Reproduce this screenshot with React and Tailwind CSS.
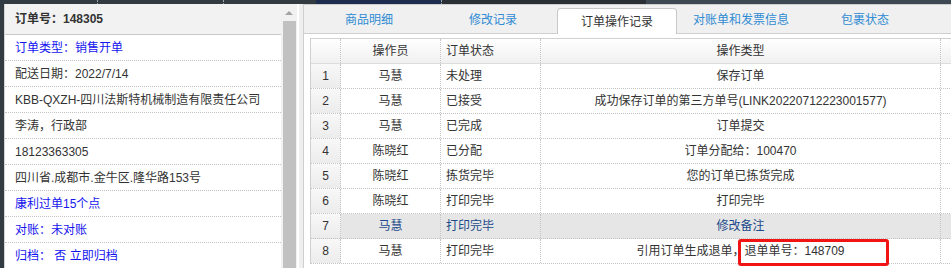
import React from "react";

const leftRows = [
  { t: "订单类型：销售开单", blue: true },
  { t: "配送日期：2022/7/14" },
  { t: "KBB-QXZH-四川法斯特机械制造有限责任公司" },
  { t: "李涛，行政部" },
  { t: "18123363305" },
  { t: "四川省.成都市.金牛区.隆华路153号" },
  { t: "康利过单15个点", blue: true },
  { t: "对账：未对账", blue: true },
  { t: "归档： 否 立即归档", blue: true },
];

const rows = [
  ["1", "马慧", "未处理", "保存订单"],
  ["2", "马慧", "已接受", "成功保存订单的第三方单号(LINK20220712223001577)"],
  ["3", "马慧", "已完成", "订单提交"],
  ["4", "陈晓红", "已分配", "订单分配给：100470"],
  ["5", "陈晓红", "拣货完毕", "您的订单已拣货完成"],
  ["6", "陈晓红", "打印完毕", "打印完毕"],
  ["7", "马慧", "打印完毕", "修改备注"],
  ["8", "马慧", "打印完毕", "引用订单生成退单，退单单号：148709"],
];

const tabs = ["商品明细", "修改记录", "订单操作记录", "对账单和发票信息", "包裹状态"];

export default function App() {
  return (
    <div className="w-[951px] h-[268px] overflow-hidden bg-[#323a42] flex flex-col font-['Liberation_Sans','Noto_Sans_CJK_SC',sans-serif] text-[12px] text-[#333]">
      {/* top strip */}
      <div className="h-[4px] flex shrink-0">
        <div className="w-[97px]" />
        <div className="w-px border-l border-dotted border-[#9aa3ab]" />
        <div className="w-[125px]" />
        <div className="w-px border-l border-dotted border-[#9aa3ab]" />
        <div className="w-[92px]" />
        <div className="w-[125px] bg-[#1d2b4f]" />
        <div className="w-px border-l border-dotted border-[#9aa3ab]" />
        <div className="w-[204px] bg-[#2a2f35]" />
        <div className="flex-1 bg-[#3e4852]" />
      </div>

      <div className="flex-1 flex pl-[4px] min-h-0">
        {/* left panel */}
        <div className="w-[277px] bg-white border-l border-[#d4d4d4] flex flex-col shrink-0">
          <div className="h-[31px] bg-[#f2f2f2] border-b border-[#c8c8c8] flex items-center pl-[10px] font-bold text-[#333] shrink-0">
            订单号：148305
          </div>
          {leftRows.map((r, i) => (
            <div
              key={i}
              className={`h-[26px] shrink-0 flex items-center pl-[10px] border-b border-dotted border-[#c4c4c4] whitespace-nowrap ${r.blue ? "text-[#1515f0]" : "text-[#333]"}`}
            >
              {r.t}
            </div>
          ))}
        </div>

        {/* scrollbar */}
        <div className="w-[16px] bg-[#f1f1f1] flex flex-col items-center shrink-0">
          <div className="h-[17px] flex items-center justify-center">
            <div className="w-0 h-0 border-l-[4px] border-r-[4px] border-b-[4px] border-l-transparent border-r-transparent border-b-[#a3a3a3]" />
          </div>
          <div className="w-[13px] flex-1 bg-[#c1c1c1] ml-[1px]" />
        </div>

        {/* gap */}
        <div className="w-[6px] bg-[#efefef] border-l-2 border-white shrink-0" />

        {/* right panel */}
        <div className="flex-1 bg-white border-l border-t border-[#cfcfcf] flex flex-col min-w-0">
          <div className="h-[29px] bg-[#f0f0f0] border-b border-[#cfcfcf] flex items-end pl-[5px] gap-[4px] shrink-0">
            {tabs.map((t, i) =>
              i === 2 ? (
                <div
                  key={t}
                  className="w-[120px] h-[26px] -mb-px bg-white border border-b-0 border-[#c8c8c8] rounded-t-[4px] flex items-center justify-center text-[#333]"
                >
                  {t}
                </div>
              ) : (
                <div
                  key={t}
                  className="w-[120px] h-[26px] flex items-center justify-center text-[#2f8bd3]"
                >
                  {t}
                </div>
              )
            )}
          </div>

          <div className="pt-[4px] pl-[6px]">
            <div className="border-t border-l border-[#d0d0d0] w-[700px]">
              {/* header */}
              <div className="h-[25px] flex border-b border-[#dcdcdc] bg-gradient-to-b from-white to-[#f0f0f0]">
                <div className="w-[30px] border-r border-dotted border-[#c4c4c4]" />
                <div className="w-[100px] border-r border-dotted border-[#c4c4c4] flex items-center justify-center">操作员</div>
                <div className="w-[100px] border-r border-dotted border-[#c4c4c4] flex items-center pl-[5px]">订单状态</div>
                <div className="w-[400px] border-r border-dotted border-[#c4c4c4] flex items-center justify-center">操作类型</div>
                <div className="flex-1" />
              </div>
              {rows.map((r, i) => {
                const hl = i === 6;
                const tc = hl ? "text-[#1b4a8a]" : "text-[#333]";
                return (
                  <div
                    key={i}
                    className={`h-[25px] flex border-b border-dotted border-[#c4c4c4] ${hl ? "bg-[#e6e6e6]" : "bg-white"}`}
                  >
                    <div className="w-[30px] border-r border-dotted border-[#c4c4c4] flex items-center justify-center bg-gradient-to-b from-[#f8f8f8] to-[#ececec] text-[#333]">
                      {r[0]}
                    </div>
                    <div className={`w-[100px] border-r border-dotted border-[#c4c4c4] flex items-center justify-center ${tc}`}>{r[1]}</div>
                    <div className={`w-[100px] border-r border-dotted border-[#c4c4c4] flex items-center pl-[5px] ${tc}`}>{r[2]}</div>
                    <div className={`relative w-[400px] border-r border-dotted border-[#c4c4c4] flex items-center justify-center whitespace-nowrap ${tc}`}>
                      {r[3]}
                      {i === 7 && (
                        <div className="absolute left-[197px] top-0 w-[151px] h-[27px] border-[3px] border-[#f01414] rounded-[3px]" />
                      )}
                    </div>
                    <div className="flex-1" />
                  </div>
                );
              })}
            </div>
          </div>
        </div>
      </div>
    </div>
  );
}
